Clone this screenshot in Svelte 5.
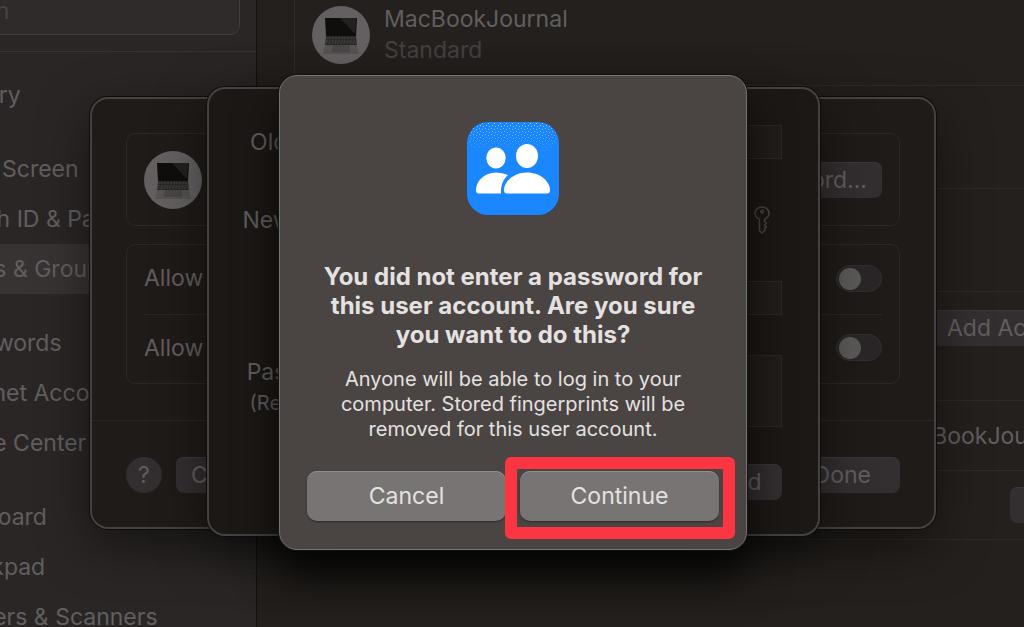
<script>
  const groups = [
    ['Battery'],
    ['Lock Screen', 'Touch ID & Password', 'Users & Groups'],
    ['Passwords', 'Internet Accounts', 'Game Center'],
    ['Keyboard', 'Trackpad', 'Printers & Scanners'],
  ];
  let selected = $state('Users & Groups');
  let search = $state('');
  let allowReset = $state(false);
  let allowAdmin = $state(false);
</script>

{#snippet laptop()}
  <svg class="avatar" viewBox="0 0 58 58" aria-hidden="true">
    <circle cx="29" cy="29" r="29" fill="#646061" />
    <path d="M13 12h32l-1 18H14z" fill="#100d0d" />
    <path d="M28 12h16l-1 16z" fill="#242020" />
    <path d="M14 30h30l1 9H13z" fill="#2b2828" />
    <path d="M14 32h30M14 35h30M13 37h32" stroke="#484444" stroke-width="1" stroke-dasharray="2 1" />
    <path d="M13 39h32l2 9H11z" fill="#555252" />
    <path d="M21 39h17v7H20z" fill="#4b4545" />
  </svg>
{/snippet}

<div class="window">
  <aside>
    <div class="search">
      <input type="text" placeholder="Search" aria-label="Search" bind:value={search} />
    </div>
    <nav>
      {#each groups as group}
        <ul>
          {#each group as item}
            <li>
              <button class="item" class:selected={item === selected} onclick={() => (selected = item)}>{item}</button>
            </li>
          {/each}
        </ul>
      {/each}
    </nav>
  </aside>

  <main>
    <div class="content">
      <section class="card users">
        <div class="user">
          {@render laptop()}
          <div>
            <p class="name">MacBookJournal</p>
            <p class="role">Standard</p>
          </div>
        </div>
        <div class="user"></div>
        <div class="user"></div>
      </section>
      <div class="actions">
        <button class="push">Add Account...</button>
      </div>
      <section class="card options">
        <div class="option"><span>MacBookJournal</span></div>
        <div class="option"><button class="push">Edit...</button></div>
      </section>
    </div>
  </main>

  <div class="layers">
    <section class="sheet account">
      <div class="sheet-body">
        <div class="group profile">
          {@render laptop()}
          <button class="push">Change Password...</button>
        </div>
        <div class="group toggles">
          <label>Allow <input type="checkbox" role="switch" bind:checked={allowReset} /></label>
          <label>Allow <input type="checkbox" role="switch" bind:checked={allowAdmin} /></label>
        </div>
      </div>
      <footer>
        <button class="help" aria-label="Help">?</button>
        <button class="push cancel">Cancel</button>
        <button class="push done">Done</button>
      </footer>
    </section>

    <form class="sheet password" onsubmit={(e) => e.preventDefault()}>
      <div class="field">
        <label for="old">Old password:</label>
        <input id="old" type="password" />
      </div>
      <div class="field">
        <label for="new">New password:</label>
        <input id="new" type="password" />
        <button type="button" class="key" aria-label="Suggest a password">
          <svg viewBox="0 0 16 28" fill="none" stroke="currentColor" stroke-width="1.5" stroke-linejoin="round">
            <path d="M5.500 13.200C2.800 12.200 1 10 1 7.300C1 3.800 4.100 1 8 1s7 2.800 7 6.300c0 2.700-1.800 4.900-4.500 5.900v2.300l1.900 1.700-1.900 2 1.900 1.900-1.900 2v1.700L8 27l-2.500-2.300z" />
            <circle cx="8" cy="5.500" r="1.300" />
          </svg>
        </button>
      </div>
      <div class="field">
        <label for="verify">Verify:</label>
        <input id="verify" type="password" />
      </div>
      <div class="field hint">
        <label for="hint">Password hint:<small>(Recommended)</small></label>
        <textarea id="hint"></textarea>
      </div>
      <div class="submit">
        <button class="push">Change Password</button>
      </div>
    </form>

    <div class="alert" role="alertdialog" aria-labelledby="alert-title" aria-describedby="alert-text">
      <svg class="app-icon" viewBox="0 0 94 94" aria-hidden="true">
        <defs>
          <pattern id="dots" width="6" height="6" patternUnits="userSpaceOnUse">
            <path d="M1 1h1v1h-1zM4 2h1v1h-1zM2 4h1v1h-1zM5 5h1v1h-1z" fill="#a5d2ff" />
          </pattern>
          <linearGradient id="fade" x2="0" y2="1">
            <stop offset="0" stop-color="#fff" />
            <stop offset="1" stop-color="#000" />
          </linearGradient>
          <mask id="top">
            <rect x="4" y="1" width="86" height="32" fill="url(#fade)" />
          </mask>
        </defs>
        <rect x="1" y="1" width="92" height="93" rx="21" fill="#1a86ff" />
        <rect x="4" y="2" width="86" height="30" rx="14" fill="url(#dots)" mask="url(#top)" />
        <g fill="#fff">
          <ellipse cx="30" cy="37" rx="9.700" ry="10.500" />
          <ellipse cx="61" cy="35" rx="11" ry="12" />
          <path d="M12.500 72.500Q10 72.500 10 69C10 60 18.500 51.500 30 51.500q6.500 0 12 2.500c-5 4.500-7.500 11-7 18.500z" />
          <path d="M41 72.500q-3 0-3-3.500C38 60.500 48 51.500 61 51.500S84 60.500 84 69q0 3.500-3 3.500z" />
        </g>
      </svg>
      <h1 id="alert-title">You did not enter a password for this user account. Are you sure you want to do this?</h1>
      <p id="alert-text">Anyone will be able to log in to your computer. Stored fingerprints will be removed for this user account.</p>
      <div class="buttons">
        <button>Cancel</button>
        <div class="marked"><button>Continue</button></div>
      </div>
    </div>
  </div>
</div>

<style>
  :global(body) {
    margin: 0;
    background: #24201d;
  }

  .window {
    position: relative;
    display: flex;
    height: 100vh;
    overflow: hidden;
    color: #625e5f;
    font-family: Inter, 'Open Sans', sans-serif;
    font-size: 23px;
    line-height: 28px;
  }

  .window * {
    box-sizing: border-box;
  }

  button, input, textarea {
    font: inherit;
    color: inherit;
    border: 0;
    margin: 0;
  }

  p, h1, ul {
    margin: 0;
    padding: 0;
  }

  /* sidebar */
  aside {
    flex: 0 0 257px;
    overflow: hidden;
    background: #2b2626;
    border-right: 1px solid #151111;
  }

  .search {
    display: flow-root;
    height: 52px;
    border-bottom: 1px solid #383333;
  }

  .search input {
    display: block;
    width: 340px;
    height: 48px;
    margin: -13px 0 0 -100px;
    padding: 0 32px;
    background: #302b2b;
    border: 1px solid #423d3d;
    border-radius: 10px;
  }

  .search input::placeholder {
    color: #484344;
    opacity: 1;
  }

  nav {
    display: flex;
    flex-direction: column;
    gap: 24px;
    margin-left: -57px;
    padding-top: 18px;
  }

  ul {
    list-style: none;
  }

  .item {
    display: block;
    width: 100%;
    height: 50px;
    padding: 0;
    background: none;
    text-align: left;
    white-space: nowrap;
  }

  .item.selected {
    background: #383333;
  }

  /* users pane */
  main {
    flex: 1;
    min-width: 0;
    overflow: hidden;
  }

  .content {
    margin: 0 -102px 0 37px;
  }

  .card {
    border: 1px solid #2e2a27;
    border-radius: 10px;
  }

  .users {
    margin-top: -19px;
  }

  .user {
    display: flex;
    align-items: center;
    gap: 14px;
    height: 103px;
    padding: 3px 17px 0;
    border-top: 1px solid #2e2a27;
  }

  .user:first-child {
    border-top: 0;
  }

  .avatar {
    flex: none;
    width: 58px;
    height: 58px;
  }

  .role {
    margin: 3px 0 2px;
    color: #444041;
  }

  .push {
    height: 36px;
    padding: 0 18px;
    background: #332e2f;
    border-radius: 8px;
    box-shadow: inset 0 1px #3c3738;
    white-space: nowrap;
  }

  .actions {
    display: flex;
    justify-content: flex-end;
    margin: 18px 0 54px;
  }

  .option {
    display: flex;
    align-items: center;
    justify-content: flex-end;
    height: 69px;
    padding: 0 18px;
    border-top: 1px solid #2e2a27;
  }

  .option:first-child {
    padding-right: 56px;
    border-top: 0;
  }

  /* stacked sheets */
  .layers {
    position: absolute;
    inset: 0;
    display: grid;
    justify-items: center;
    align-items: start;
    padding: 75px 0 0 2px;
  }

  .layers > * {
    grid-area: 1 / 1;
  }

  .sheet {
    background: #1f1b18;
    border: 2px solid #464141;
    border-radius: 18px;
    box-shadow: 0 0 0 1px #0f0c0b, 0 16px 50px rgba(0, 0, 0, 0.5);
  }

  .account {
    width: 846px;
    margin-top: 22px;
  }

  .sheet-body {
    display: flex;
    flex-direction: column;
    gap: 18px;
    padding: 34px 34px 36px;
  }

  .group {
    border: 1px solid #2c2825;
    border-radius: 9px;
    padding: 0 17px;
  }

  .profile {
    display: flex;
    align-items: center;
    justify-content: space-between;
    height: 93px;
  }

  .profile .push {
    padding: 0 15px;
  }

  .toggles label {
    display: flex;
    align-items: center;
    justify-content: space-between;
    height: 69px;
    padding-bottom: 3px;
  }

  .toggles label + label {
    border-top: 1px solid #2a2623;
  }

  .toggles input {
    appearance: none;
    width: 46px;
    height: 27px;
    padding: 2px;
    background: #2a2526;
    border: 1px solid #332f2f;
    border-radius: 14px;
  }

  .toggles input::before {
    content: '';
    display: block;
    width: 22px;
    height: 22px;
    background: #5b5957;
    border-radius: 50%;
  }

  .toggles input:checked::before {
    margin-left: auto;
  }

  footer {
    display: flex;
    gap: 14px;
    padding: 36px 34px 34px;
    border-top: 1px solid #2a2623;
  }

  .help {
    width: 36px;
    height: 36px;
    padding: 0;
    background: #332e2f;
    border-radius: 50%;
  }

  .cancel {
    padding: 0 15px;
  }

  .done {
    margin-left: auto;
    padding: 0 29px;
  }

  .password {
    width: 613px;
    margin-top: 12px;
    padding: 36px 36px 34px 34px;
    background: #1c1815;
  }

  .field {
    display: flex;
    gap: 12px;
    margin-bottom: 44px;
  }

  .field:nth-child(3) {
    margin-bottom: 40px;
  }

  .field label {
    flex: 0 0 164px;
    line-height: 34px;
    text-align: right;
    white-space: nowrap;
  }

  .field small {
    display: block;
    font-size: 20px;
    line-height: 28px;
  }

  .field input, .field textarea {
    flex: 1;
    min-width: 0;
    height: 34px;
    padding: 0 8px;
    background: #211d1a;
    border: 1px solid #2c2825;
    resize: none;
  }

  .field textarea {
    height: 72px;
  }

  .field.hint {
    margin-bottom: 37px;
  }

  .key {
    flex: none;
    width: 40px;
    height: 34px;
    padding: 3px 12px;
    background: none;
    color: #4a4645;
  }

  .key svg {
    display: block;
    width: 16px;
    height: 28px;
  }

  .submit {
    display: flex;
    justify-content: flex-end;
  }

  .submit .push {
    padding: 0 20px;
  }

  /* alert */
  .alert {
    display: flex;
    flex-direction: column;
    align-items: center;
    width: 468px;
    padding: 45px 27px 28px;
    background: #4a4443;
    border: 1px solid #777272;
    border-radius: 18px;
    box-shadow: 0 0 0 1px #161211, 0 28px 44px rgba(0, 0, 0, 0.75);
    color: #e4e2e1;
    text-align: center;
  }

  .app-icon {
    width: 94px;
    height: 94px;
  }

  h1 {
    width: 390px;
    margin-top: 47px;
    font-size: 24px;
    font-weight: 700;
    line-height: 29px;
  }

  .alert p {
    width: 360px;
    margin-top: 18px;
    font-size: 20px;
    line-height: 25px;
  }

  .buttons {
    display: grid;
    grid-template-columns: 1fr 1fr;
    gap: 14px;
    width: 100%;
    margin-top: 29px;
  }

  .buttons button {
    width: 100%;
    height: 50px;
    background: #787473;
    border-radius: 10px;
    box-shadow: inset 0 1px #928e8d, 0 1px 2px rgba(0, 0, 0, 0.4);
  }

  .marked {
    position: relative;
  }

  .marked::after {
    content: '';
    position: absolute;
    inset: -14px -16px -18px -15px;
    border: 12px solid #fb3541;
    border-radius: 6px;
    pointer-events: none;
  }
</style>
